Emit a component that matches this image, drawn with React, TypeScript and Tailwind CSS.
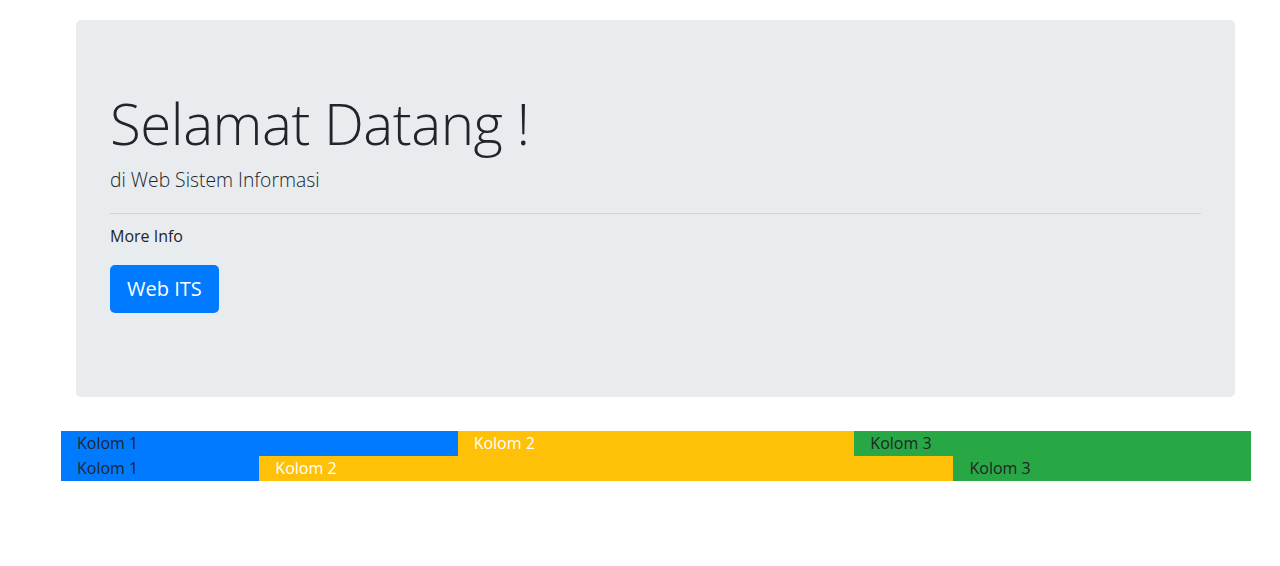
export default function App() {
  return (
    <div className="min-h-screen bg-white pt-[20px] text-[#212529]" style={{ fontFamily: '"Open Sans", "Noto Sans", sans-serif' }}>
      {/* Jumbotron */}
      <div className="ml-[76px] w-[1159px] rounded-[5px] bg-[#e9ecef] px-[34px] pt-[70px] pb-[84px]">
        <h1 className="text-[56.5px] font-light leading-[1.2] tracking-[-0.5px]">Selamat Datang !</h1>
        <p className="mt-[8px] text-[19.3px] font-light leading-[1.5]">di Web Sistem Informasi</p>
        <hr className="mt-[18px] mb-[10px] border-t border-[#d2d4d7]" />
        <p className="text-[16px] leading-[1.5]">More Info</p>
        <a
          href="#"
          className="mt-[17px] inline-block rounded-[5px] bg-[#007bff] px-[17px] py-[9px] text-[20px] leading-[1.5] text-white"
        >
          Web ITS
        </a>
      </div>

      {/* Grid rows */}
      <div className="ml-[61px] mt-[34px] w-[1190px] text-[16px] leading-[25px]">
        <div className="grid grid-cols-12">
          <div className="col-span-4 bg-[#007bff] pl-[16px] text-[#212529]">Kolom 1</div>
          <div className="col-span-4 bg-[#ffc107] pl-[16px] text-white">Kolom 2</div>
          <div className="col-span-4 bg-[#28a745] pl-[16px] text-[#212529]">Kolom 3</div>
        </div>
        <div className="grid grid-cols-12">
          <div className="col-span-2 bg-[#007bff] pl-[16px] text-[#212529]">Kolom 1</div>
          <div className="col-span-7 bg-[#ffc107] pl-[16px] text-white">Kolom 2</div>
          <div className="col-span-3 bg-[#28a745] pl-[16px] text-[#212529]">Kolom 3</div>
        </div>
      </div>
    </div>
  )
}
